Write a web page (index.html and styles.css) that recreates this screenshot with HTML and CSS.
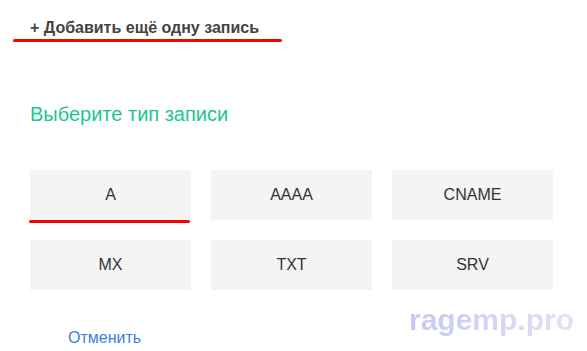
FILE: index.html
```
<!DOCTYPE html>
<html lang="ru">
<head>
<meta charset="utf-8">
<link rel="stylesheet" href="styles.css">
</head>
<body>
<div class="page">
  <div class="add-link">+ Добавить ещё одну запись</div>
  <div class="red-line"></div>
  <h2 class="title">Выберите тип записи</h2>
  <div class="types">
    <div class="type">A<span class="mark"></span></div>
    <div class="type">AAAA</div>
    <div class="type">CNAME</div>
    <div class="type">MX</div>
    <div class="type">TXT</div>
    <div class="type">SRV</div>
  </div>
  <a class="cancel">Отменить</a>
  <div class="watermark">ragemp.pro</div>
</div>
</body>
</html>
```
FILE: styles.css
```
html, body { margin: 0; padding: 0; background: #fff; }
body { font-family: "Liberation Sans", Arial, sans-serif; }
.page { position: relative; width: 587px; height: 351px; overflow: hidden; padding-left: 30px; box-sizing: border-box; }
.add-link { padding-top: 18px; font-size: 16px; font-weight: bold; line-height: 20px; color: #444; }
.red-line { margin-left: -17px; margin-top: 1px; width: 269px; height: 3px; background: #f00; border-radius: 2px; }
.title { margin: 60px 0 0; font-size: 20px; font-weight: normal; line-height: 24px; color: #21c68b; }
.types { margin-top: 44px; display: grid; grid-template-columns: repeat(3, 161px); grid-auto-rows: 50px; gap: 20px; }
.type { position: relative; background: #f4f4f4; display: flex; align-items: center; justify-content: center; font-size: 16px; color: #333; }
.mark { position: absolute; left: -1px; bottom: -3px; width: 161px; height: 3px; background: #f00; border-radius: 2px; }
.cancel { display: block; margin: 38px 0 0 38px; font-size: 16px; line-height: 20px; color: #3a7de0; }
.watermark { position: absolute; left: 409px; top: 302px; font-size: 30px; font-weight: bold; line-height: 36px; background: linear-gradient(90deg, #c4c8f6, #e8def6); -webkit-background-clip: text; background-clip: text; color: transparent; }
```
